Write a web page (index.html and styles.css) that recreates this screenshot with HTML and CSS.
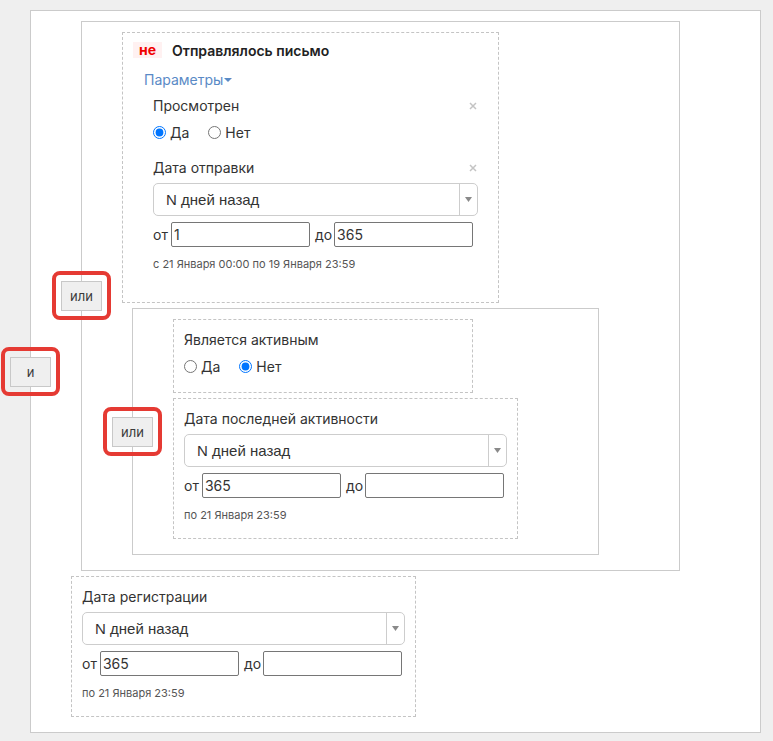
FILE: index.html
```html
<!DOCTYPE html>
<html lang="ru">
<head>
<meta charset="utf-8">
<title>Условия</title>
<link rel="stylesheet" href="styles.css">
</head>
<body>
<div class="group">
  <div class="op"><button class="op-btn" type="button">и</button><span class="mark"></span></div>

  <div class="group">
    <div class="op"><button class="op-btn" type="button">или</button><span class="mark"></span></div>

    <div class="cond cond-mail">
      <div class="cond-head"><span class="neg">не</span><span class="cond-title">Отправлялось письмо</span></div>
      <div class="params-toggle">Параметры<span class="caret"></span></div>
      <div class="params">
        <div class="label-row"><span class="label">Просмотрен</span><svg class="close" width="8" height="8" viewBox="0 0 8 8"><path d="M1 1L7 7M7 1L1 7"/></svg></div>
        <div class="radios">
          <label class="radio"><input type="radio" name="seen" checked><span>Да</span></label>
          <label class="radio"><input type="radio" name="seen"><span>Нет</span></label>
        </div>
        <div class="label-row label-row-gap"><span class="label">Дата отправки</span><svg class="close" width="8" height="8" viewBox="0 0 8 8"><path d="M1 1L7 7M7 1L1 7"/></svg></div>
        <div class="select"><span class="select-text">N дней назад</span><span class="select-arrow"><svg width="7" height="5" viewBox="0 0 7 5"><path d="M0 0H7L3.5 5Z"/></svg></span></div>
        <div class="range">
          <span class="range-label">от</span><input class="range-input" type="text" value="1">
          <span class="range-label range-label-to">до</span><input class="range-input" type="text" value="365">
        </div>
        <div class="hint">с 21 Января 00:00 по 19 Января 23:59</div>
      </div>
    </div>

    <div class="group">
      <div class="op"><button class="op-btn" type="button">или</button><span class="mark"></span></div>

      <div class="cond cond-short">
        <div class="label">Является активным</div>
        <div class="radios">
          <label class="radio"><input type="radio" name="active"><span>Да</span></label>
          <label class="radio"><input type="radio" name="active" checked><span>Нет</span></label>
        </div>
      </div>

      <div class="cond">
        <div class="label">Дата последней активности</div>
        <div class="select"><span class="select-text">N дней назад</span><span class="select-arrow"><svg width="7" height="5" viewBox="0 0 7 5"><path d="M0 0H7L3.5 5Z"/></svg></span></div>
        <div class="range">
          <span class="range-label">от</span><input class="range-input" type="text" value="365">
          <span class="range-label range-label-to">до</span><input class="range-input" type="text" value="">
        </div>
        <div class="hint">по 21 Января 23:59</div>
      </div>
    </div>
  </div>

  <div class="cond">
    <div class="label">Дата регистрации</div>
    <div class="select"><span class="select-text">N дней назад</span><span class="select-arrow"><svg width="7" height="5" viewBox="0 0 7 5"><path d="M0 0H7L3.5 5Z"/></svg></span></div>
    <div class="range">
      <span class="range-label">от</span><input class="range-input" type="text" value="365">
      <span class="range-label range-label-to">до</span><input class="range-input" type="text" value="">
    </div>
    <div class="hint">по 21 Января 23:59</div>
  </div>
</div>
</body>
</html>
```
FILE: styles.css
```css
* { box-sizing: border-box; }

body {
  margin: 0;
  padding: 10px 0 0 30px;
  background: #efefef;
  font-family: Inter, "Noto Sans", sans-serif;
  font-size: 14px;
  color: #333;
}

.group {
  position: relative;
  display: flex;
  flex-direction: column;
  align-items: flex-start;
  gap: 5px;
  width: fit-content;
  background: #fff;
  border: 1px solid #cbcbcb;
  padding: 10px 80px 15px 40px;
}

.group .group { margin-left: 10px; }

.op {
  position: absolute;
  left: -21px;
  top: 50%;
  width: 41px;
  height: 30px;
  transform: translateY(-50%);
}

.op-btn {
  display: block;
  width: 100%;
  height: 100%;
  margin: 0;
  padding: 0;
  background: #efefef;
  border: 1px solid #c8c8c8;
  border-radius: 0;
  font-family: Inter, "Noto Sans", sans-serif;
  font-size: 13px;
  color: #3a3a3a;
}

.mark {
  position: absolute;
  left: -9px;
  right: -9px;
  top: -10px;
  bottom: -9px;
  border: 4px solid #e53a33;
  border-radius: 8px;
}

.cond {
  width: 345px;
  border: 1px dashed #c4c4c4;
  padding: 10px 10px 15px 10px;
  background: #fff;
}

.cond-short {
  width: 300px;
  padding-bottom: 16px;
}

.cond-mail {
  width: 377px;
  padding-top: 9px;
}

.cond-head {
  display: flex;
  align-items: center;
  height: 16px;
}

.neg {
  display: inline-block;
  height: 16px;
  line-height: 16px;
  padding: 0 6px;
  background: #fff1f1;
  color: #f00000;
  font-weight: 700;
  font-size: 14px;
}

.cond-title {
  margin-left: 10px;
  font-weight: 600;
  color: #222;
}

.params-toggle {
  display: flex;
  align-items: center;
  margin: 12px 0 0 11px;
  height: 20px;
  line-height: 20px;
  color: #5a8ac6;
}

.caret {
  width: 0;
  height: 0;
  margin-left: 1px;
  border-left: 4px solid transparent;
  border-right: 4px solid transparent;
  border-top: 4px solid #5a8ac6;
}

.params {
  margin: 6px 10px 0 20px;
  padding-bottom: 15px;
}

.label {
  display: block;
  height: 20px;
  line-height: 20px;
}

.label-row {
  display: flex;
  align-items: center;
  justify-content: space-between;
  height: 20px;
}

.label-row-gap { margin-top: 16px; }

.close {
  margin-right: 1px;
  stroke: #c4c4c4;
  stroke-width: 1.5;
  fill: none;
}

.radios {
  display: flex;
  align-items: center;
  gap: 19px;
  height: 20px;
  margin-top: 6px;
}

.radio {
  display: flex;
  align-items: center;
  gap: 4px;
}

.radio input {
  width: 13px;
  height: 13px;
  margin: 0;
}

.select {
  display: flex;
  height: 33px;
  margin-top: 5px;
  border: 1px solid #cdcdcd;
  border-radius: 5px;
  background: #fff;
}

.select-text {
  flex: 1;
  padding-left: 12px;
  line-height: 31px;
  font-family: "Liberation Sans", Arial, sans-serif;
  font-size: 15px;
  color: #333;
}

.select-arrow {
  display: flex;
  align-items: center;
  justify-content: center;
  width: 18px;
  border-left: 1px solid #cdcdcd;
}

.select-arrow svg { fill: #8a8a8a; }

.range {
  display: flex;
  align-items: center;
  height: 25px;
  margin-top: 6px;
}

.range-label { margin-right: 3px; }

.range-label-to { margin-left: 5px; margin-right: 2px; }

.range-input {
  width: 139px;
  height: 25px;
  margin: 0;
  padding: 0 2px;
  border: 1px solid #767676;
  border-radius: 2px;
  font-family: Inter, "Noto Sans", sans-serif;
  font-size: 14px;
  color: #333;
}

.hint {
  margin-top: 9px;
  height: 16px;
  line-height: 16px;
  font-size: 11px;
  color: #555;
}
```
